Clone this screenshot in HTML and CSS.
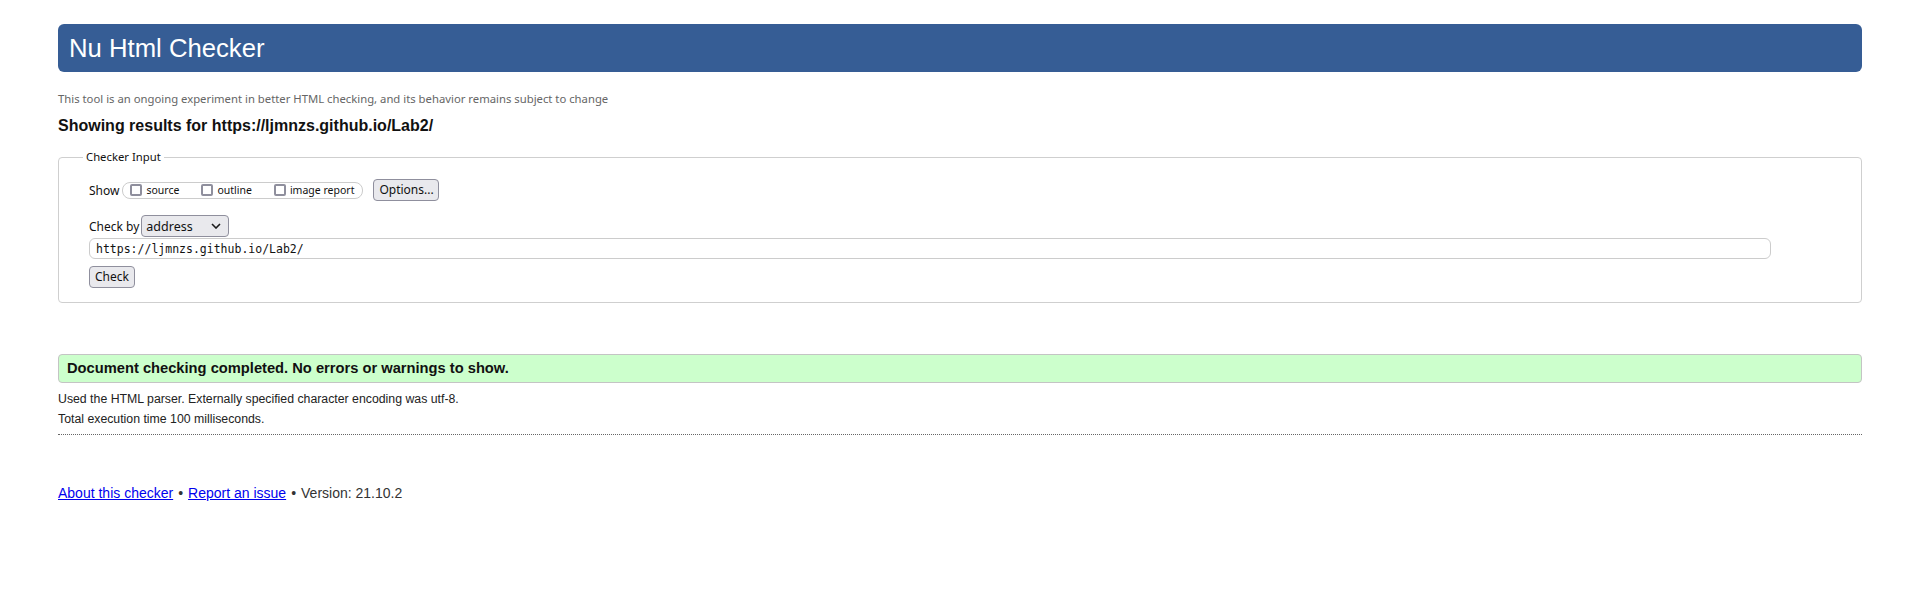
FILE: index.html
```html
<!DOCTYPE html>
<html lang="en">
<head>
<meta charset="utf-8">
<title>Showing results for https://ljmnzs.github.io/Lab2/ - Nu Html Checker</title>
<link rel="stylesheet" href="styles.css">
</head>
<body>
<h1 class="title">Nu Html Checker</h1>
<p class="intro">This tool is an ongoing experiment in better HTML checking, and its behavior remains subject to change</p>
<h2 class="results-for">Showing results for https://ljmnzs.github.io/Lab2/</h2>
<form class="checker-form">
  <fieldset class="checker-input">
    <legend class="legend">Checker Input</legend>
    <div class="row show-row">
      <span class="label">Show</span>
      <span class="show-group">
        <label class="opt"><input type="checkbox" class="cb"><span>source</span></label>
        <label class="opt"><input type="checkbox" class="cb"><span>outline</span></label>
        <label class="opt"><input type="checkbox" class="cb"><span>image report</span></label>
      </span>
      <button type="button" class="btn options-btn">Options...</button>
    </div>
    <div class="row checkby-row">
      <span class="label">Check by</span>
      <span class="select-wrap">
        <select class="select"><option>address</option></select>
        <svg class="chev" width="10" height="6" viewBox="0 0 10 6"><path d="M1 1l4 4 4-4" fill="none" stroke="#1b1b1b" stroke-width="1.6"/></svg>
      </span>
    </div>
    <div class="row url-row">
      <input class="url" type="text" value="https://ljmnzs.github.io/Lab2/">
    </div>
    <div class="row">
      <button type="button" class="btn check-btn">Check</button>
    </div>
  </fieldset>
</form>
<p class="success">Document checking completed. No errors or warnings to show.</p>
<p class="details">Used the HTML parser. Externally specified character encoding was utf-8.</p>
<p class="details">Total execution time 100 milliseconds.</p>
<hr class="sep">
<p class="footer"><a href="#">About this checker</a><span class="dot">•</span><a href="#">Report an issue</a><span class="dot">•</span>Version: 21.10.2</p>
</body>
</html>
```

FILE: styles.css
```css
html {
  background: #fff;
  color: #000;
  font-family: "Liberation Sans", Arial, sans-serif;
}
body {
  margin: 0;
  padding: 24px 58px;
}
.title {
  margin: 0;
  height: 48px;
  line-height: 48px;
  padding: 0 11px;
  background: #365d95;
  color: #fff;
  font-size: 25.7px;
  font-weight: normal;
  border-radius: 6px;
}
.intro {
  margin: 20px 0 0;
  font-family: "Noto Sans", sans-serif;
  font-size: 11.3px;
  line-height: 14px;
  color: #666;
}
.results-for {
  margin: 11px 0 0;
  font-size: 16px;
  line-height: 18px;
  font-weight: bold;
  color: #111;
}
.checker-form {
  margin: 15px 0 0;
}
.checker-input {
  margin: 0;
  padding: 15px 0 14px 30px;
  border: 1px solid #cfcfcf;
  border-radius: 4px;
  font-family: "Noto Sans", sans-serif;
  font-size: 12px;
  color: #111;
}
.legend {
  padding: 0 3px;
  margin-left: -6px;
  font-size: 11.3px;
  line-height: 14px;
}
.row {
  display: flex;
  align-items: center;
}
.show-row {
  height: 22px;
}
.label {
  margin-right: 2px;
}
.show-group {
  display: inline-flex;
  align-items: center;
  height: 15px;
  padding: 0 8px 0 7px;
  margin-left: 1px;
  border: 1px solid #ccc;
  border-radius: 8px;
  gap: 22px;
}
.opt {
  display: inline-flex;
  align-items: center;
  font-size: 10.5px;
  gap: 4px;
}
.cb {
  appearance: none;
  -webkit-appearance: none;
  margin: 0;
  width: 12px;
  height: 12px;
  border: 2px solid #8f8f9d;
  border-radius: 2px;
  background: #fff;
  box-sizing: border-box;
}
.btn {
  font-family: "Noto Sans", sans-serif;
  font-size: 12px;
  color: #111;
  background: #e9e9ed;
  border: 1px solid #8f8f9d;
  border-radius: 4px;
  padding: 0 5px;
  height: 22px;
  line-height: 20px;
}
.options-btn {
  margin-left: 10px;
  width: 66px;
}
.checkby-row {
  margin-top: 14px;
  height: 22px;
}
.select-wrap {
  position: relative;
  display: inline-block;
}
.select {
  appearance: none;
  -webkit-appearance: none;
  font-family: "Noto Sans", sans-serif;
  font-size: 12.5px;
  color: #111;
  background: #e9e9ed;
  border: 1px solid #8f8f9d;
  border-radius: 4px;
  width: 88px;
  height: 22px;
  padding: 0 4px;
  margin: 0;
}
.chev {
  position: absolute;
  right: 8px;
  top: 8px;
  pointer-events: none;
}
.url-row {
  margin-top: 1px;
}
.url {
  box-sizing: border-box;
  width: 1682px;
  height: 21px;
  margin: 0;
  padding: 0 6px;
  border: 1px solid #ccc;
  border-radius: 6px;
  font-family: "DejaVu Sans Mono", monospace;
  font-size: 11.5px;
  color: #111;
  background: #fff;
}
.check-btn {
  margin-top: 7px;
  width: 46px;
  padding: 0;
}
.success {
  margin: 51px 0 0;
  height: 27px;
  line-height: 27px;
  padding: 0 8px;
  background: #ccffcc;
  border: 1px solid #c4c4c4;
  border-radius: 4px;
  font-weight: bold;
  font-size: 14.7px;
  color: #111;
}
.details {
  margin: 0;
  font-size: 12.3px;
  line-height: 20px;
  color: #222;
}
.success + .details {
  margin-top: 6px;
}
.sep {
  margin: 5px 0 0;
  border: 0;
  border-top: 1px dotted #666;
  height: 0;
}
.footer {
  margin: 49px 0 0;
  font-size: 14px;
  line-height: 18px;
  color: #333;
}
.footer a {
  color: #00e;
}
.dot {
  padding: 0 5px;
}
```
